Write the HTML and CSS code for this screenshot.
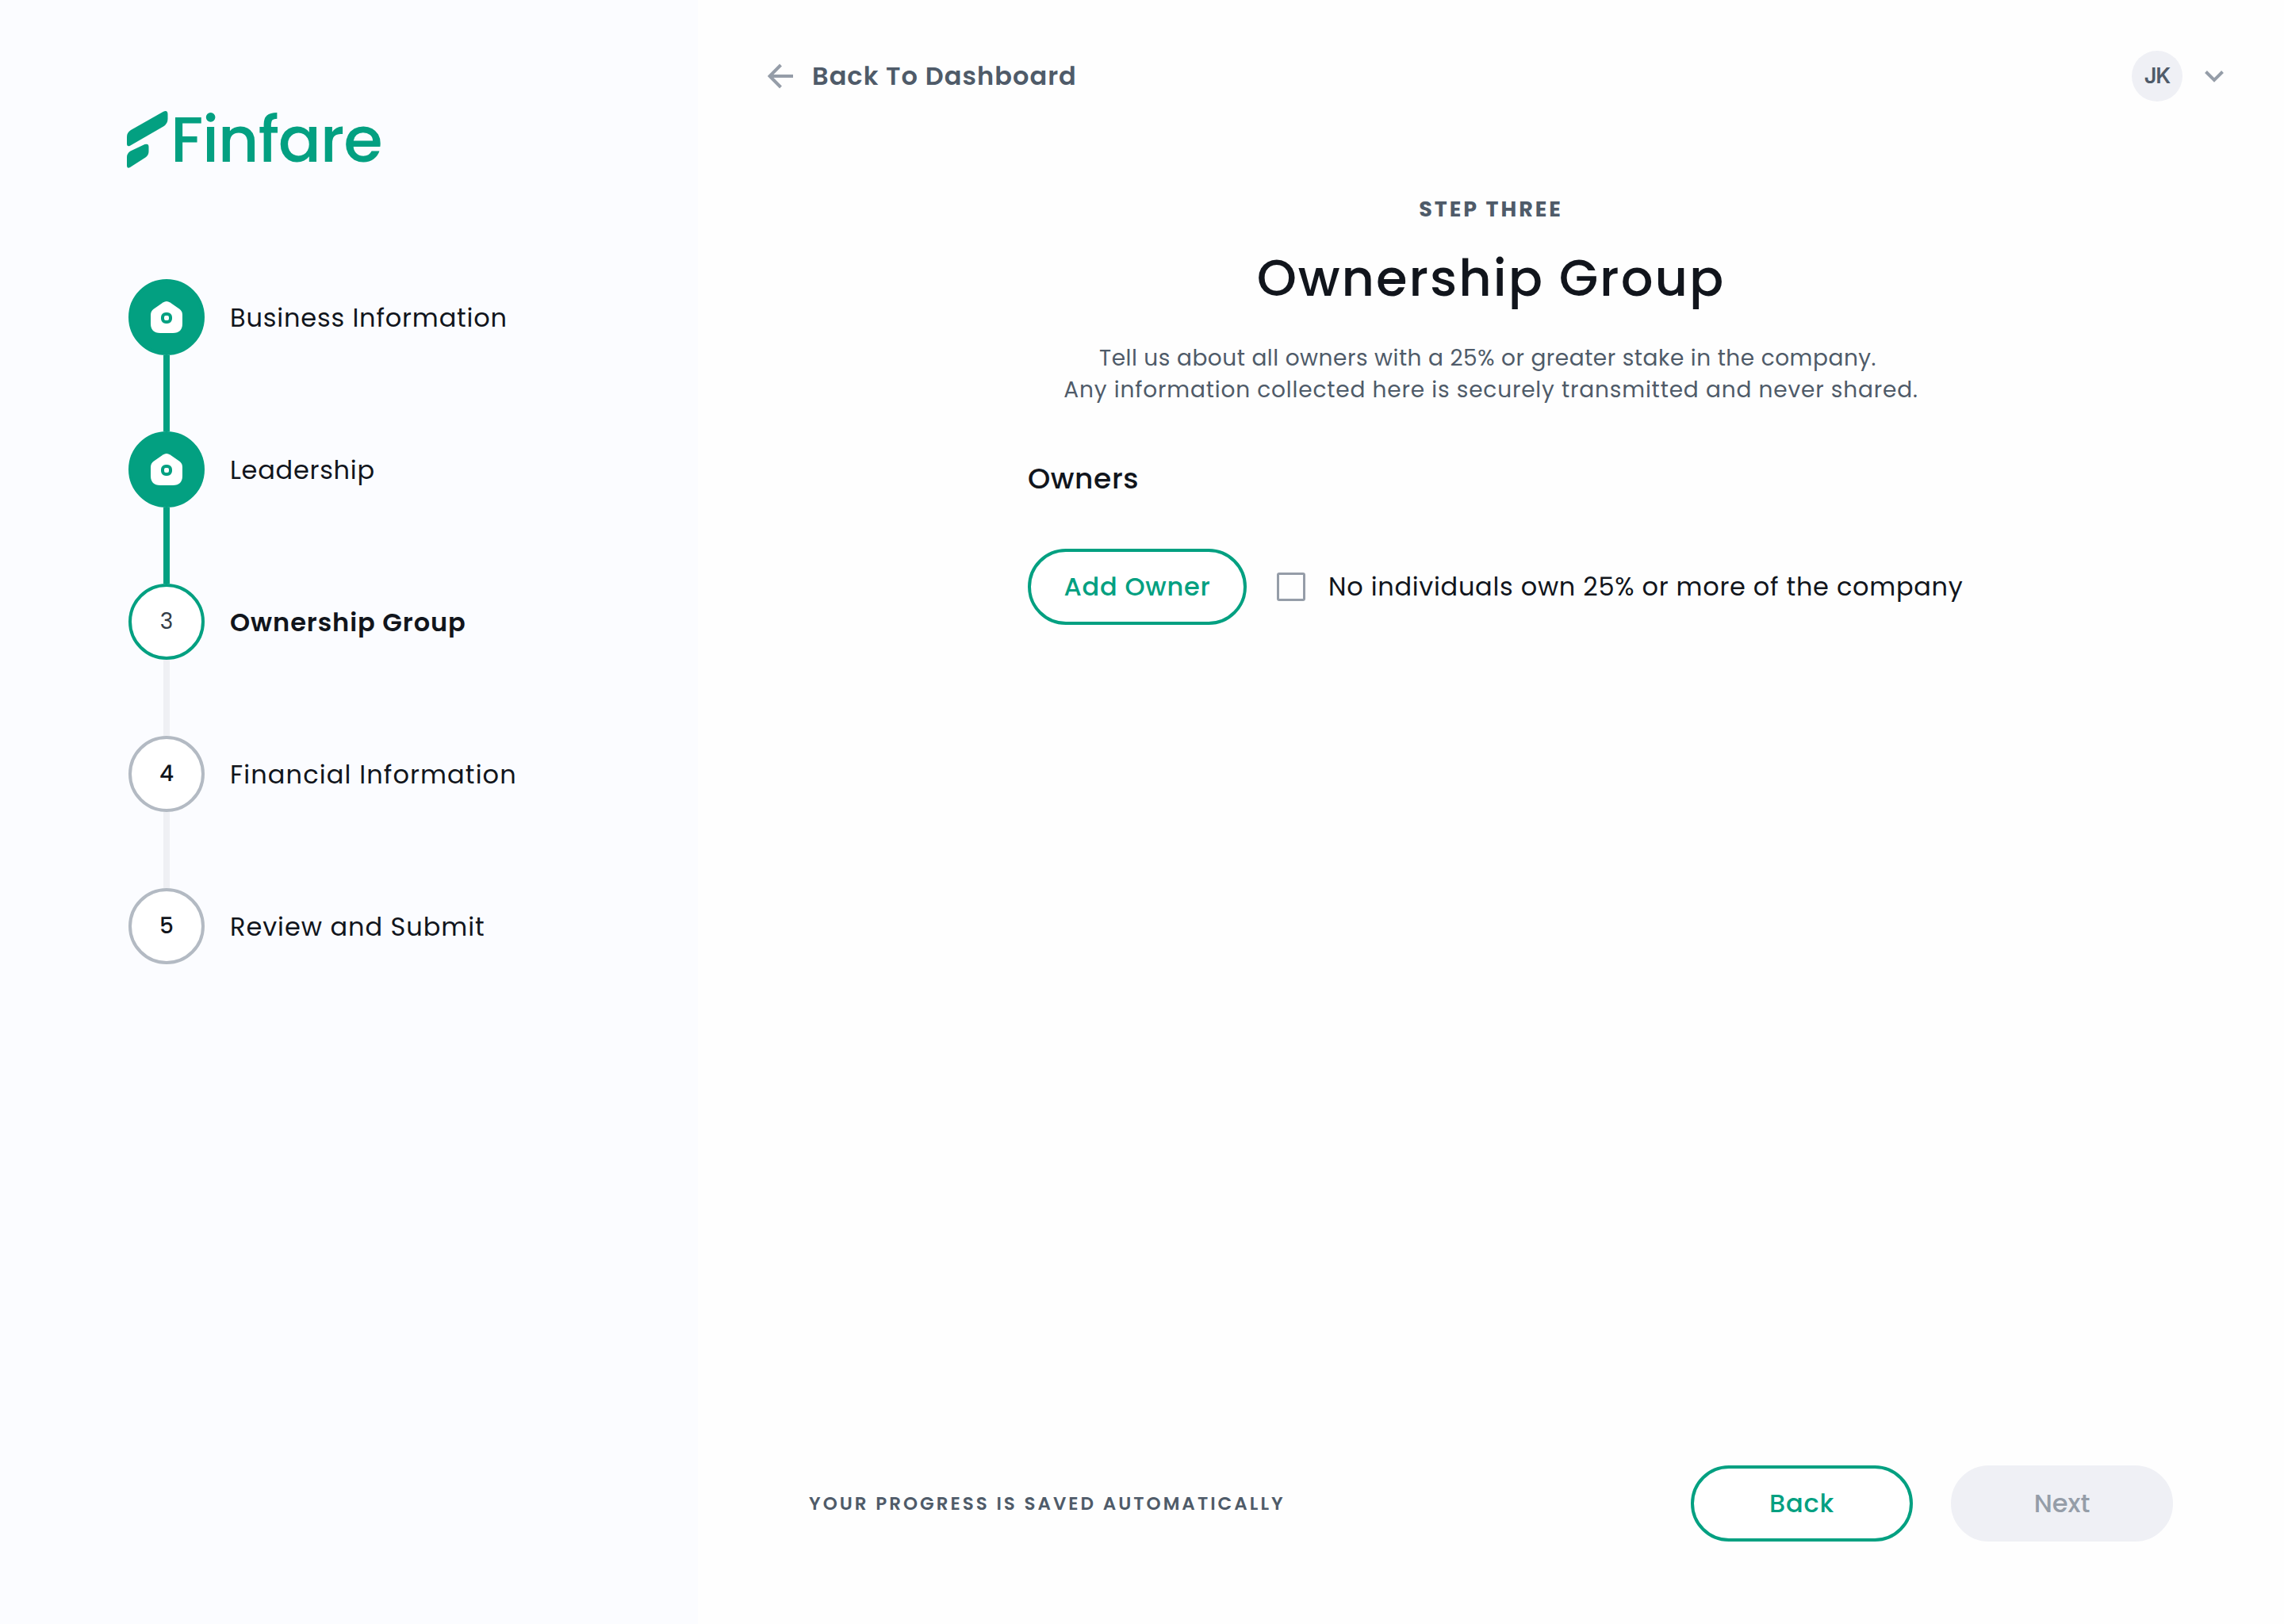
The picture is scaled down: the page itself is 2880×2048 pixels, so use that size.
FILE: index.html
```
<!DOCTYPE html>
<html lang="en">
<head>
    <meta charset="UTF-8">
    <meta name="viewport" content="width=device-width, initial-scale=1.0">
    <title>Finfare - Ownership Group</title>
    <link rel="stylesheet" href="styles.css">
</head>
<body>
    <aside class="sidebar">
        <div class="logo">
            <svg class="logo-mark" width="52" height="72" viewBox="0 0 52 72">
                <path d="M0 32.5 Q0 27 5 24 L46 .7 Q51.5 -1.5 51.5 4 V10 Q51.5 16 46 19.5 L4 43.7 Q0 45.500 0 41 Z"/>
                <path d="M0 58 Q0 53.500 4.500 50.500 L22.500 42 Q27.500 40.500 27.500 45 V51 Q27.500 56 23.500 58.500 L4 71 Q0 73 0 69 Z"/>
            </svg>
            <span class="logo-text">Finfare</span>
        </div>
        <ol class="steps">
            <li class="step done">
                <span class="circle">
                    <svg width="40" height="40" viewBox="0 0 40 40">
                        <path class="house" d="M15.500 1.500 Q20 -1.500 24.500 1.500 L36 9.500 Q40 12.300 40 17 V28 Q40 40 28 40 H12 Q0 40 0 28 V17 Q0 12.300 4 9.500 Z"/>
                        <rect class="door" x="15" y="16" width="10" height="10" rx="4"/>
                    </svg>
                </span>
                <span class="label business">Business Information</span>
            </li>
            <li class="step done">
                <span class="circle">
                    <svg width="40" height="40" viewBox="0 0 40 40">
                        <path class="house" d="M15.500 1.500 Q20 -1.500 24.500 1.500 L36 9.500 Q40 12.300 40 17 V28 Q40 40 28 40 H12 Q0 40 0 28 V17 Q0 12.300 4 9.500 Z"/>
                        <rect class="door" x="15" y="16" width="10" height="10" rx="4"/>
                    </svg>
                </span>
                <span class="label leadership">Leadership</span>
            </li>
            <li class="step current">
                <span class="circle">3</span>
                <span class="label">Ownership Group</span>
            </li>
            <li class="step">
                <span class="circle">4</span>
                <span class="label financial">Financial Information</span>
            </li>
            <li class="step">
                <span class="circle">5</span>
                <span class="label">Review and Submit</span>
            </li>
        </ol>
    </aside>

    <main class="main">
        <header class="topbar">
            <a class="back-link" href="#">
                <svg width="32" height="32" viewBox="0 0 32 32">
                    <path d="M32 16 H3 M16.500 2 L2.500 16 L16.500 30"/>
                </svg>
                Back To Dashboard
            </a>
            <div class="user">
                <span class="avatar">JK</span>
                <svg width="24" height="15" viewBox="0 0 24 15">
                    <path d="M1.500 1.500 L12 12 L22.500 1.500"/>
                </svg>
            </div>
        </header>

        <section class="intro">
            <p class="eyebrow">STEP THREE</p>
            <h1>Ownership Group</h1>
            <p class="lead"><span class="lead-first">Tell us about all owners with a 25% or greater stake in the company.</span><br>Any information collected here is securely transmitted and never shared.</p>
        </section>

        <section class="owners">
            <h2>Owners</h2>
            <div class="owners-row">
                <button class="btn btn-add">Add Owner</button>
                <label class="check">
                    <input type="checkbox">
                    No individuals own 25% or more of the company
                </label>
            </div>
        </section>

        <footer class="footer">
            <p class="saved">YOUR PROGRESS IS SAVED AUTOMATICALLY</p>
            <div class="actions">
                <button class="btn">Back</button>
                <button class="btn btn-next" disabled>Next</button>
            </div>
        </footer>
    </main>
</body>
</html>
```
FILE: styles.css
```
* {
    box-sizing: border-box;
    margin: 0;
    padding: 0;
}

body {
    display: flex;
    height: 2048px;
    font-family: Poppins, Inter, sans-serif;
    font-size: 32px;
    color: #11151c;
    background-color: #fefefe;
}

/* sidebar */
.sidebar {
    width: 880px;
    padding: 140px 0 0 160px;
    background-color: #fbfcff;
}

.logo {
    display: flex;
    height: 72px;
}

.logo-mark {
    fill: #03a081;
}

.logo-text {
    margin-left: 3px;
    font-size: 80px;
    font-weight: 500;
    line-height: 72px;
    letter-spacing: -1.26px;
    color: #03a081;
}

.steps {
    margin: 140px 0 0 2px;
    list-style: none;
}

.step {
    display: flex;
    align-items: center;
    gap: 32px;
    position: relative;
    height: 96px;
    margin-bottom: 96px;
}

/* line down to the next step */
.step:not(:last-child)::after {
    content: "";
    position: absolute;
    left: 44px;
    top: 96px;
    width: 8px;
    height: 96px;
    background-color: #eff0f4;
}

.step.done::after {
    background-color: #03a081;
}

.circle {
    display: flex;
    align-items: center;
    justify-content: center;
    width: 96px;
    height: 96px;
    border: 4px solid #b3bac3;
    border-radius: 50%;
    background-color: #fff;
    font-size: 28px;
    font-weight: 500;
}

.done .circle {
    border-color: #03a081;
    background-color: #03a081;
}

.current .circle {
    border-color: #03a081;
    font-weight: 400;
    color: #333d47;
}

.house {
    fill: #fff;
}

.door {
    fill: #fff;
    stroke: #03a081;
    stroke-width: 4;
}

.label {
    padding-top: 2px;
    letter-spacing: 0.95px;
}

.business {
    letter-spacing: 0.83px;
}

.leadership {
    letter-spacing: 0.74px;
}

.financial {
    letter-spacing: 1.12px;
}

.current .label {
    font-weight: 600;
}

/* main */
.main {
    display: flex;
    flex-direction: column;
    flex: 1;
    padding: 64px 76px 104px 88px;
}

.topbar {
    display: flex;
    justify-content: space-between;
    align-items: center;
    height: 64px;
}

.topbar svg {
    fill: none;
    stroke: #959da8;
    stroke-width: 4;
}

.back-link {
    display: flex;
    align-items: center;
    gap: 24px;
    font-weight: 600;
    letter-spacing: 1.05px;
    color: #4f5b69;
    text-decoration: none;
}

.user {
    display: flex;
    align-items: center;
    gap: 28px;
}

.avatar {
    width: 64px;
    height: 64px;
    border-radius: 50%;
    background-color: #eff0f5;
    font-family: Inter, sans-serif;
    font-size: 27px;
    font-weight: 600;
    line-height: 64px;
    letter-spacing: -1px;
    text-align: center;
    color: #4f5b69;
}

.intro {
    margin-top: 116px;
    padding-right: 12px;
    text-align: center;
    color: #4f5b69;
}

.eyebrow {
    font-size: 27px;
    font-weight: 700;
    line-height: 40px;
    letter-spacing: 2.93px;
}

h1 {
    margin-top: 19px;
    font-size: 64px;
    font-weight: 500;
    line-height: 96px;
    letter-spacing: 1.98px;
    color: #11151c;
}

.lead {
    margin-top: 33px;
    font-size: 28px;
    line-height: 40px;
    letter-spacing: 0.83px;
}

.lead-first {
    margin-right: 8px;
    letter-spacing: 0.52px;
}

.owners {
    margin: 68px 0 0 328px;
}

h2 {
    font-size: 36px;
    font-weight: 500;
    line-height: 48px;
    letter-spacing: 0.6px;
}

.owners-row {
    display: flex;
    align-items: center;
    gap: 38px;
    margin-top: 64px;
}

.btn {
    width: 280px;
    height: 96px;
    border: 4px solid #03a081;
    border-radius: 48px;
    background-color: #fff;
    font-family: inherit;
    font-size: 32px;
    font-weight: 500;
    letter-spacing: 0.75px;
    color: #03a081;
}

.btn-add {
    width: 276px;
}

.btn-next {
    border-color: #eff0f5;
    background-color: #eff0f5;
    letter-spacing: 0;
    color: #959da8;
}

.check {
    display: flex;
    align-items: center;
    gap: 29px;
    letter-spacing: 0.71px;
}

.check input {
    appearance: none;
    width: 36px;
    height: 36px;
    border: 3px solid #959da8;
    border-radius: 3px;
}

.footer {
    display: flex;
    justify-content: space-between;
    align-items: center;
    margin-top: auto;
    padding: 0 64px 0 52px;
}

.saved {
    font-size: 23px;
    font-weight: 600;
    letter-spacing: 3.04px;
    color: #4f5b69;
}

.actions {
    display: flex;
    gap: 48px;
}
```
